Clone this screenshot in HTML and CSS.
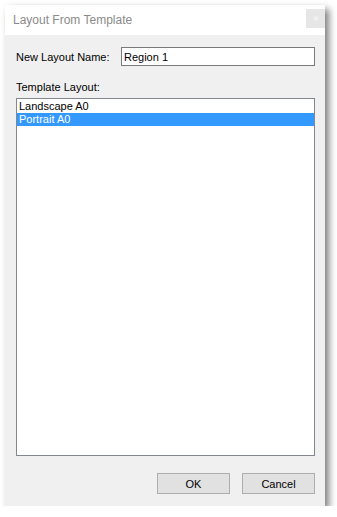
FILE: index.html
```html
<!DOCTYPE html>
<html>
<head>
<meta charset="utf-8">
<link rel="stylesheet" href="styles.css">
</head>
<body>
<div class="window">
  <div class="titlebar">
    <span class="title">Layout From Template</span>
    <span class="close">&#x2715;</span>
  </div>
  <div class="content">
    <div class="row-name">
      <span class="label">New Layout Name:</span>
      <div class="input">Region 1</div>
    </div>
    <div class="label tl">Template Layout:</div>
    <div class="list">
      <div class="item">Landscape A0</div>
      <div class="item sel">Portrait A0</div>
    </div>
    <div class="buttons">
      <div class="btn">OK</div>
      <div class="btn">Cancel</div>
    </div>
  </div>
</div>
</body>
</html>
```
FILE: styles.css
```css
html, body { margin: 0; padding: 0; background: #ffffff; }
body { font-family: "Liberation Sans", Arial, sans-serif; font-size: 11px; color: #000; }
.window {
  margin: 5px 0 0 5px;
  width: 320px;
  height: 501px;
  display: flex;
  flex-direction: column;
  box-shadow: 4px 4px 7px rgba(0,0,0,0.5);
}
.titlebar {
  height: 30px;
  background: #ffffff;
  display: flex;
  align-items: center;
  justify-content: space-between;
  padding-left: 8px;
}
.title { color: #8a8a8a; font-size: 12px; }
.close {
  width: 19px; height: 19px; margin-top: -3px;
  background: #e6e6e6; color: #f6f6f6;
  display: flex; align-items: center; justify-content: center;
  font-size: 7px; font-weight: bold;
}
.content {
  flex: 1;
  background: #f0f0f0;
  padding: 12px 10px 12px 11px;
  display: flex;
  flex-direction: column;
}
.row-name { display: flex; align-items: center; height: 19px; }
.label { width: 105px; }
.input {
  flex: 1;
  height: 19px;
  box-sizing: border-box;
  border: 1px solid #7a7a7a;
  background: #fff;
  padding: 2px 0 0 2px;
  line-height: 14px;
}
.tl { margin-top: 14px; height: 14px; line-height: 14px; }
.list {
  margin-top: 4px;
  height: 358px;
  box-sizing: border-box;
  border: 1px solid #828790;
  background: #fff;
  padding: 1px 0 0 0;
}
.item { height: 13px; line-height: 13px; padding-left: 2px; }
.sel { background: #3399ff; color: #fff; }
.buttons {
  margin-top: 17px;
  display: flex;
  justify-content: flex-end;
  gap: 12px;
}
.btn {
  width: 73px; height: 21px; box-sizing: border-box;
  background: #e1e1e1;
  border: 1px solid #adadad;
  display: flex; align-items: center; justify-content: center;
}
```
